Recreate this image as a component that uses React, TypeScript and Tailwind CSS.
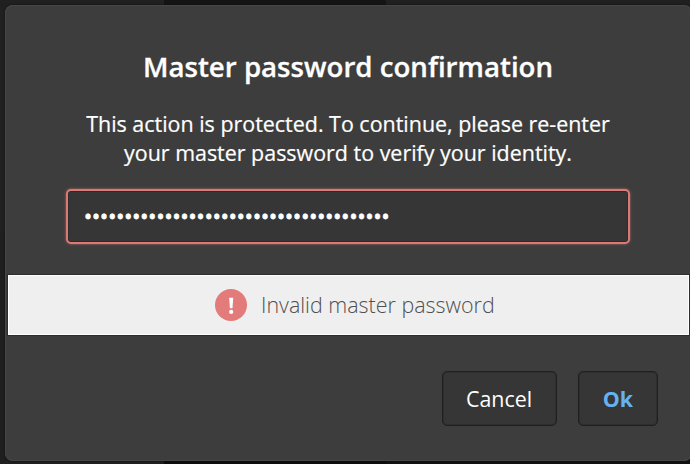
const BULLETS = '\u2022'.repeat(38);

function Backdrop() {
  return (
    <div className="absolute inset-0 grid grid-cols-[164px_222px_1fr] grid-rows-2">
      <div className="bg-[#202020]" />
      <div className="bg-[#141414]" />
      <div className="bg-[#202020]" />
      <div className="bg-[#201f20]" />
      <div className="bg-[#0d0d0d]" />
      <div className="bg-[#121111]" />
    </div>
  );
}

function PasswordField() {
  return (
    <div className="mt-[22px] ml-[61px] flex h-[55px] w-[564px] items-center rounded-[5px] border-2 border-[#dc7975] bg-[#363636] pb-px pl-[16px] shadow-[0_0_3px_rgba(239,127,123,0.6),inset_0_0_0_1px_#2b2d2d]">
      <span className="whitespace-nowrap text-[21.4px] leading-none text-white [-webkit-text-stroke:0.8px_white]">{BULLETS}</span>
    </div>
  );
}

function ErrorBanner() {
  return (
    <div className="mt-[31px] ml-[3px] flex h-[60px] w-[681px] items-center border border-white bg-[#efefef] pl-[206px] shadow-[0_0_0_1px_#2c2c2c]">
      <svg width="32" height="32" viewBox="0 0 32 32" aria-hidden="true">
        <circle cx="16" cy="16" r="16" fill="#e27b79" />
        <path d="M14.2 8.7h4l-.7 10.6h-2.6z" fill="#fff" />
        <circle cx="16.2" cy="22.9" r="2.1" fill="#fff" />
      </svg>
      <span className="ml-[14px] whitespace-nowrap text-[21.45px] font-light leading-none text-[#505050]">
        Invalid master password
      </span>
    </div>
  );
}

export default function App() {
  return (
    <main className="relative h-[464px] w-[690px] overflow-hidden bg-[#202020] pt-[5px] pl-[5px] font-['Open_Sans','Noto_Sans',sans-serif] text-white">
      <Backdrop />
      <section className="relative flex h-[456px] w-[687px] flex-col rounded-[8px] bg-[#3d3d3d] shadow-[0_0_2px_#111,inset_0_0_0_1px_#464646]">
        <h1 className="mt-[43px] h-9 w-[686px] whitespace-nowrap text-center text-[27.65px] font-semibold leading-9 [-webkit-text-stroke:0.3px_white]">
          Master password confirmation
        </h1>
        <p className="mt-[25px] w-[686px] whitespace-nowrap text-center text-[21.45px] leading-[29px] [-webkit-text-stroke:0.2px_white]">
          This action is protected. To continue, please re-enter
          <br />
          your master password to verify your identity.
        </p>
        <PasswordField />
        <ErrorBanner />
        <div className="mt-[36px] mr-[34px] flex justify-end gap-[21px]">
          <button className="h-[55px] w-[115px] rounded-[5px] border border-[#202020] bg-[#363636] pt-px pr-[1px] text-[21.4px] shadow-[inset_0_0_0_1px_#2e2e2e]">
            Cancel
          </button>
          <button className="h-[55px] w-[80px] rounded-[5px] border border-[#202020] bg-[#363636] pt-px text-[21.4px] font-bold text-[#66b2f0] shadow-[inset_0_0_0_1px_#2e2e2e]">
            Ok
          </button>
        </div>
      </section>
    </main>
  );
}
